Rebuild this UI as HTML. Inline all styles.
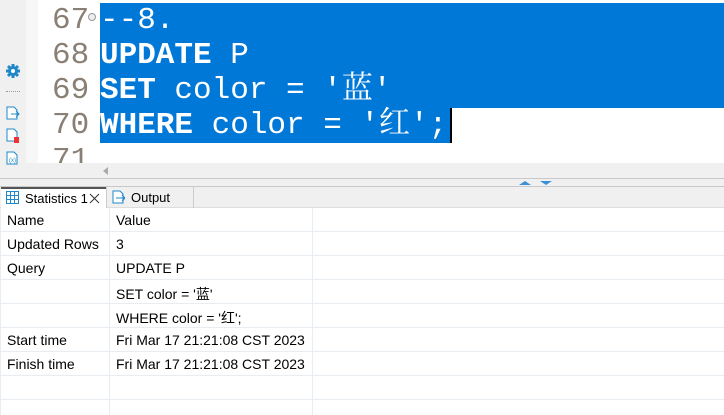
<!DOCTYPE html>
<html><head><meta charset="utf-8"><style>
*{margin:0;padding:0;box-sizing:border-box}
body{width:724px;height:415px;overflow:hidden;background:#fff;position:relative;font-family:"Liberation Sans","Noto Sans CJK SC",sans-serif}
.abs{position:absolute}
.code{font-family:"Liberation Mono","Noto Serif CJK SC",monospace;font-size:31px;line-height:35px;white-space:pre;color:#fff}
.ln{font-family:"Liberation Mono",monospace;font-size:31px;line-height:35px;color:#8a7f74;white-space:pre}
.row{position:absolute;left:0;width:724px;height:24px;border-bottom:1px solid #e8edf2;font-size:14px;color:#000}
.row span{position:absolute;top:4px}
</style></head><body>
<div class="abs" style="left:0;top:0;width:26px;height:178px;background:#f0f0f0"></div>
<div class="abs" style="left:26px;top:0;width:12px;height:163px;background:#f7f7f7"></div>
<div class="abs" style="left:38px;top:0;width:60px;height:163px;background:#fff"></div>
<div class="abs" style="left:100px;top:3px;width:624px;height:105px;background:#0078d7"></div>
<div class="abs" style="left:100px;top:108px;width:351px;height:35px;background:#0078d7"></div>
<div class="abs" style="left:450px;top:108px;width:2px;height:35px;background:#000"></div>
<div class="abs ln" style="left:52px;top:3px">67<br>68<br>69<br>70<br>71</div>
<div class="abs" style="left:88px;top:13px;width:8px;height:8px;border:1px solid #999;border-radius:50%;background:#eee"></div>
<div class="abs" style="left:0;top:0;width:724px;height:163px;overflow:hidden"><div class="abs code" style="left:100px;top:3px">--8.
<b>UPDATE</b> P
<b>SET</b> color = '蓝'
<b>WHERE</b> color = '红';</div></div>
<div class="abs" style="left:26px;top:163px;width:698px;height:15px;background:#f0f0f0"></div>
<div class="abs" style="left:103px;top:167px;width:0;height:0;border-top:4px solid transparent;border-bottom:4px solid transparent;border-right:5px solid #aaa"></div>
<svg class="abs" style="left:5px;top:63px" width="16" height="16" viewBox="0 0 16 16"><circle cx="8" cy="8" r="5" fill="#1e88c8"/><g stroke="#1e88c8" stroke-width="3"><path d="M8 1v14M1 8h14M3 3l10 10M13 3L3 13"/></g><circle cx="8" cy="8" r="2" fill="#fff"/></svg>
<div class="abs" style="left:6px;top:91px;width:14px;border-top:1px dotted #999"></div>
<svg class="abs" style="left:6px;top:106px" width="14" height="14"><path d="M1 1h7l3 3v9H1z" fill="#fff" stroke="#1e88c8"/><path d="M5 8h8M10 5l3 3-3 3" stroke="#1e88c8" fill="none"/></svg>
<svg class="abs" style="left:6px;top:128px" width="14" height="16"><path d="M1 1h7l3 3v9H1z" fill="#fff" stroke="#1e88c8"/><rect x="8" y="9" width="5" height="6" fill="#e33"/></svg>
<svg class="abs" style="left:6px;top:151px" width="14" height="14"><path d="M1 1h7l3 3v9H1z" fill="#fff" stroke="#1e88c8"/><text x="3" y="11" font-size="6" fill="#1e88c8">(x)</text></svg>
<div class="abs" style="left:0;top:178px;width:724px;height:1px;background:#c8c8c8"></div>
<div class="abs" style="left:0;top:179px;width:724px;height:7px;background:#f0f0f0"></div>
<div class="abs" style="left:0;top:186px;width:724px;height:1px;background:#c8c8c8"></div>
<div class="abs" style="left:519px;top:181px;width:0;height:0;border-left:6px solid transparent;border-right:6px solid transparent;border-bottom:4px solid #3d8fd6"></div>
<div class="abs" style="left:540px;top:181px;width:0;height:0;border-left:6px solid transparent;border-right:6px solid transparent;border-top:4px solid #3d8fd6"></div>
<div class="abs" style="left:0;top:187px;width:724px;height:21px;background:#f0f0f0;border-bottom:1px solid #ddd"></div>
<div class="abs" style="left:1px;top:187px;width:105px;height:21px;background:#fff;border-top:2px solid #555;font-size:13px;padding:2px 0 0 24px;white-space:nowrap">Statistics 1</div>
<svg class="abs" style="left:89px;top:193px" width="11" height="11"><path d="M1 1l9 9M10 1l-9 9" stroke="#333" stroke-width="1"/></svg>
<svg class="abs" style="left:6px;top:191px" width="13" height="13"><rect x=".5" y=".5" width="12" height="12" fill="none" stroke="#1e88c8"/><path d="M4.5 0v13M8.5 0v13M0 4.5h13M0 8.5h13" stroke="#1e88c8"/></svg>
<div class="abs" style="left:106px;top:187px;width:88px;height:21px;border-left:1px solid #ccc;border-right:1px solid #ccc;font-size:13px;padding:3px 0 0 24px">Output</div>
<svg class="abs" style="left:112px;top:190px" width="13" height="14"><path d="M1 1h7l3 3v9H1z" fill="#fff" stroke="#1e88c8"/><path d="M4 8h9M10 5l3 3-3 3" stroke="#1e88c8" fill="none"/></svg>
<div class="abs" style="left:0;top:208px;width:724px;height:207px">
<div class="row" style="top:0"><span style="left:7px">Name</span><span style="left:116px">Value</span></div>
<div class="row" style="top:24px"><span style="left:7px">Updated Rows</span><span style="left:116px">3</span></div>
<div class="row" style="top:48px"><span style="left:7px">Query</span><span style="left:116px">UPDATE P</span></div>
<div class="row" style="top:72px"><span style="left:116px">SET color = '蓝'</span></div>
<div class="row" style="top:96px"><span style="left:116px">WHERE color = '红';</span></div>
<div class="row" style="top:120px"><span style="left:7px">Start time</span><span style="left:116px">Fri Mar 17 21:21:08 CST 2023</span></div>
<div class="row" style="top:144px"><span style="left:7px">Finish time</span><span style="left:116px">Fri Mar 17 21:21:08 CST 2023</span></div>
<div class="row" style="top:168px"></div>
<div class="abs" style="left:109px;top:0;width:1px;height:207px;background:#e8edf2"></div>
<div class="abs" style="left:312px;top:0;width:1px;height:207px;background:#e8edf2"></div>
<div class="abs" style="left:0;top:0;width:1px;height:207px;background:#e8edf2"></div>
</div>
</body></html>
